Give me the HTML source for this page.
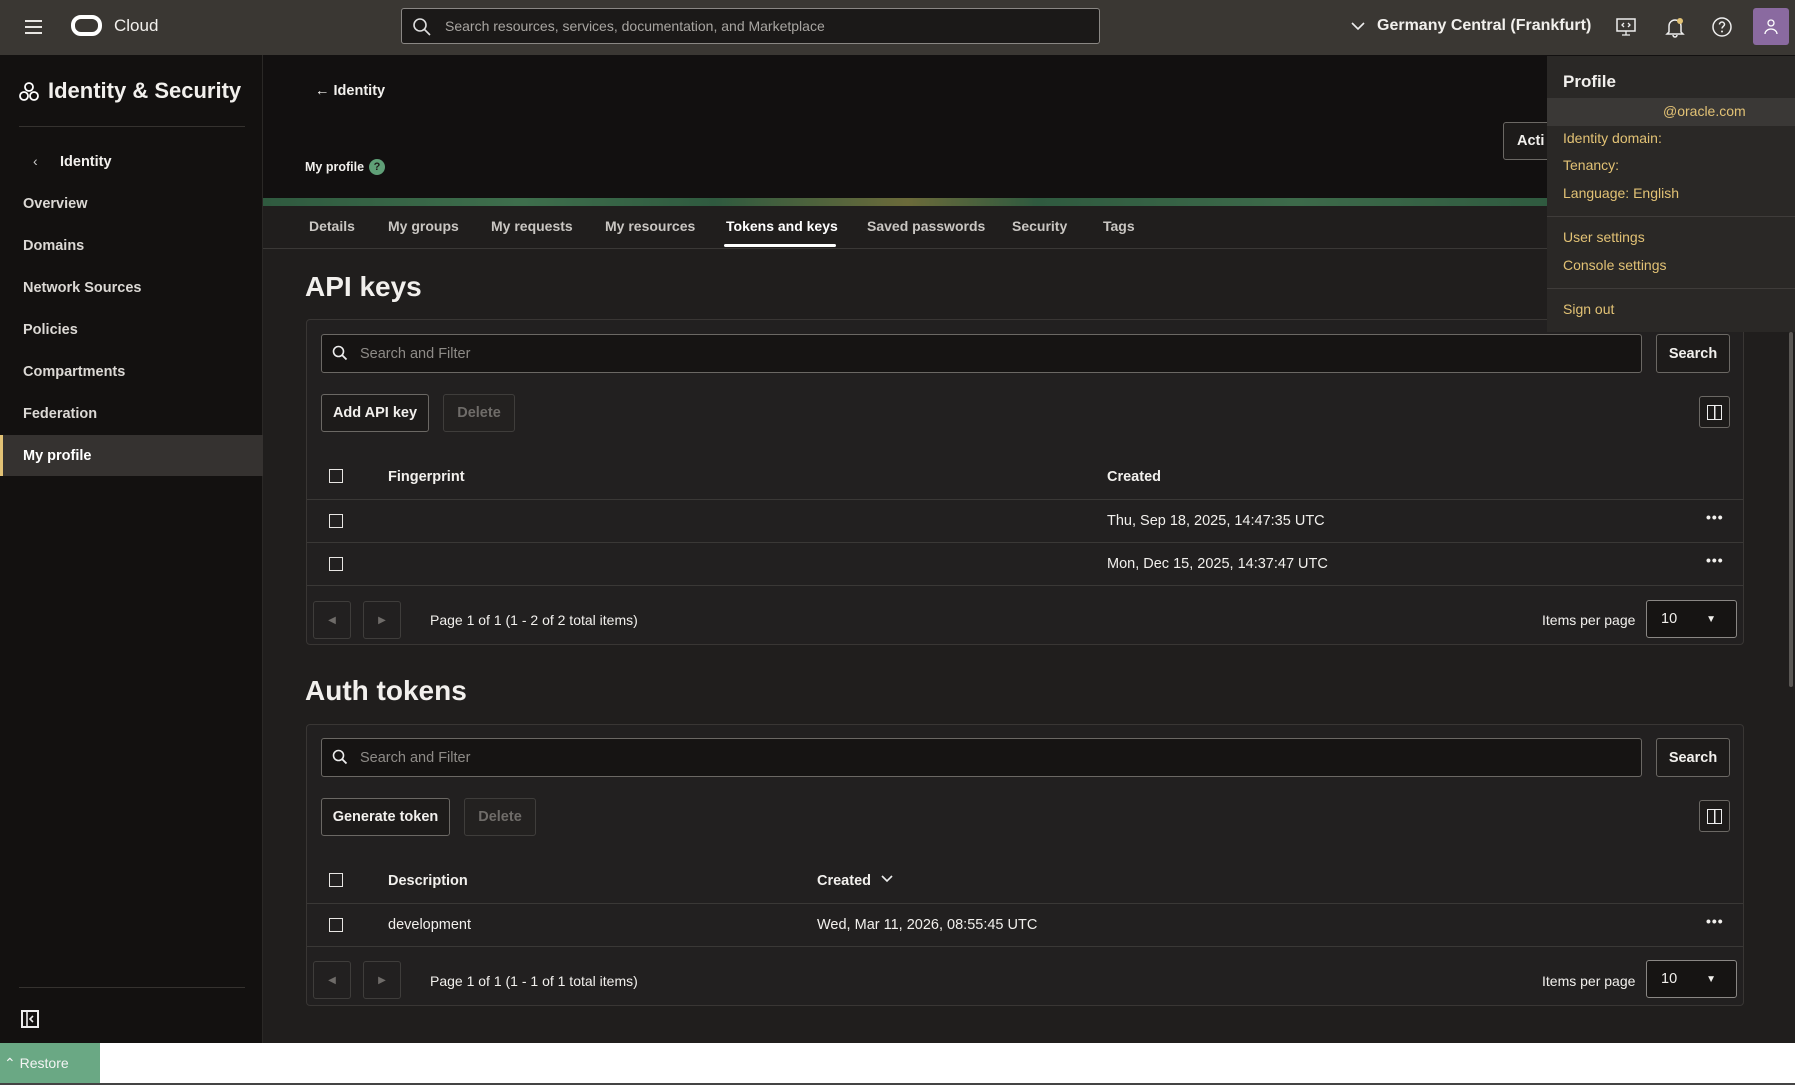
<!DOCTYPE html>
<html><head><meta charset="utf-8">
<style>
*{box-sizing:border-box;margin:0;padding:0}
body{width:1795px;height:1085px;overflow:hidden;background:#201e1d;font-family:"Liberation Sans",sans-serif;color:#f2f0ed;position:relative;font-size:14.5px}
.abs{position:absolute}
.top{left:0;top:0;width:1795px;height:55px;background:#3a3733}
.side{left:0;top:55px;width:263px;height:988px;background:#131110;border-right:1px solid #2a2826}
.hdr{left:263px;top:55px;width:1532px;height:143px;background:#121010}
.b{font-weight:bold}
.btn{position:absolute;border:1px solid #6b6864;border-radius:3px;font-weight:bold;font-size:14.5px;display:flex;align-items:center;justify-content:center;color:#f2f0ed;background:#1d1b1a}
.dis{color:#6f6c69;border-color:#3f3d3b;background:#232120}
.panel{position:absolute;left:306px;width:1438px;border:1px solid #393634;border-radius:4px;background:#222020}
.inp{position:absolute;background:#161413;border:1px solid #6b6864;border-radius:3px;color:#8e8b87;font-size:14.5px;display:flex;align-items:center;padding-left:38px}
.cb{position:absolute;width:14px;height:14px;border:1.5px solid #e8e6e3}
.line{position:absolute;height:1px;background:#3a3836}
.t{position:absolute;white-space:nowrap}
.dots{position:absolute;font-weight:bold;letter-spacing:1px;font-size:14px}
.pg{position:absolute;width:38px;height:38px;border:1px solid #3f3d3b;border-radius:3px;color:#6f6c69;font-size:10px;display:flex;align-items:center;justify-content:center}
.sel{position:absolute;width:91px;height:38px;border:1px solid #8a8784;border-radius:3px;background:#161413;padding-left:14px;display:flex;align-items:center;font-size:14.5px}
.nav{position:absolute;left:23px;font-size:14.5px;font-weight:bold;color:#dcd9d5}
.tab{position:absolute;top:218px;font-size:14px;font-weight:bold;color:#c9c6c2}
.menu{left:1547px;top:56px;width:248px;height:276px;background:#2a2826}
.mi{position:absolute;left:16px;font-size:14px;color:#e2c275}
</style></head><body>
<div class="abs top">
  <div class="abs" style="left:25px;top:20px;width:17px;height:2px;background:#e8e6e3;box-shadow:0 6px 0 #e8e6e3,0 12px 0 #e8e6e3"></div>
  <div class="abs" style="left:71px;top:15px;width:31px;height:21px;border:4px solid #fff;border-radius:10px"></div>
  <div class="t" style="left:114px;top:16px;font-size:17px">Cloud</div>
  <div class="abs" style="left:401px;top:8px;width:699px;height:36px;background:#1b1918;border:1px solid #8a8784;border-radius:3px"></div>
  <svg class="abs" style="left:412px;top:17px" width="20" height="20" viewBox="0 0 20 20"><circle cx="8" cy="8" r="6" fill="none" stroke="#ddd" stroke-width="1.6"/><path d="M12.5 12.5L18 18" stroke="#ddd" stroke-width="1.6"/></svg>
  <div class="t" style="left:445px;top:18px;font-size:14px;color:#a8a5a1">Search resources, services, documentation, and Marketplace</div>
  <svg class="abs" style="left:1350px;top:20px" width="16" height="12"><path d="M2 3l6 6 6-6" fill="none" stroke="#eee" stroke-width="1.6"/></svg>
  <div class="t b" style="left:1377px;top:17px;font-size:16px">Germany Central (Frankfurt)</div>
  <svg class="abs" style="left:1615px;top:16px" width="22" height="22" viewBox="0 0 22 22"><rect x="2" y="3" width="18" height="12" fill="none" stroke="#eee" stroke-width="1.5"/><path d="M11 15v4M7 19h8M9 7l-2 2 2 2M13 7l2 2-2 2" fill="none" stroke="#eee" stroke-width="1.3"/></svg>
  <svg class="abs" style="left:1664px;top:16px" width="22" height="22" viewBox="0 0 22 22"><path d="M5 16V10a6 6 0 0112 0v6l2 2H3z M9 19a2 2 0 004 0" fill="none" stroke="#eee" stroke-width="1.5"/><circle cx="16" cy="5" r="3" fill="#e2c275"/></svg>
  <svg class="abs" style="left:1711px;top:16px" width="22" height="22" viewBox="0 0 22 22"><circle cx="11" cy="11" r="9" fill="none" stroke="#eee" stroke-width="1.5"/><path d="M8.5 8.5a2.5 2.5 0 115 0c0 1.8-2.5 2-2.5 4" fill="none" stroke="#eee" stroke-width="1.5"/><circle cx="11" cy="15.5" r="1" fill="#eee"/></svg>
  <div class="abs" style="left:1753px;top:8px;width:36px;height:37px;background:#8a6aa0;border-radius:3px"></div>
  <svg class="abs" style="left:1762px;top:18px" width="18" height="18"><circle cx="9" cy="5" r="3" fill="none" stroke="#fff" stroke-width="1.3"/><path d="M3 16a6 5 0 0112 0" fill="none" stroke="#fff" stroke-width="1.3"/></svg>
</div>
<div class="abs side">
  <svg class="abs" style="left:18px;top:27px" width="22" height="20" viewBox="0 0 22 20"><circle cx="11" cy="5" r="4" fill="none" stroke="#fff" stroke-width="1.8"/><circle cx="6" cy="14" r="4" fill="none" stroke="#fff" stroke-width="1.8"/><circle cx="16" cy="14" r="4" fill="none" stroke="#fff" stroke-width="1.8"/></svg>
  <div class="t b" style="left:48px;top:23px;font-size:22px">Identity &amp; Security</div>
  <div class="abs" style="left:19px;top:71px;width:226px;height:1px;background:#35322f"></div>
  <div class="t" style="left:33px;top:98px;font-size:14px;color:#ccc">&#8249;</div>
  <div class="t b" style="left:60px;top:99px;font-size:14.5px">Identity</div>
  <div class="nav" style="top:141px">Overview</div>
  <div class="nav" style="top:183px">Domains</div>
  <div class="nav" style="top:225px">Network Sources</div>
  <div class="nav" style="top:267px">Policies</div>
  <div class="nav" style="top:309px">Compartments</div>
  <div class="nav" style="top:351px">Federation</div>
  <div class="abs" style="left:0;top:380px;width:263px;height:41px;background:#353230;border-left:3px solid #e2c275"></div>
  <div class="nav" style="top:393px;color:#fff">My profile</div>
  <div class="abs" style="left:19px;top:932px;width:226px;height:1px;background:#35322f"></div>
  <svg class="abs" style="left:21px;top:955px" width="18" height="18"><rect x="1" y="1" width="16" height="16" fill="none" stroke="#eee" stroke-width="2"/><path d="M6 1v16M12 6l-3 3 3 3" fill="none" stroke="#eee" stroke-width="1.6"/></svg>
</div>
<div class="abs hdr">
  <div class="t b" style="left:52px;top:28px;font-size:14.5px">&#8592; Identity</div>
  <div class="t b" style="left:42px;top:105px;font-size:12.5px">My profile</div>
  <div class="abs" style="left:106px;top:104px;width:16px;height:16px;border-radius:50%;background:#5f9f77;color:#1d1b1a;font-size:11px;font-weight:bold;text-align:center;line-height:16px">?</div>
  <div class="btn" style="left:1240px;top:67px;width:60px;height:38px;justify-content:flex-start;padding-left:13px">Acti</div>
</div>
<div class="abs" style="left:263px;top:198px;width:1290px;height:8px;background:linear-gradient(90deg,#2f5a3f,#3e6e4c 20%,#2f5a3f 35%,#6b6a3a 50%,#2f5a3f 60%,#3d6a4a 80%,#2f5a3f)"></div>
<div class="abs" style="left:263px;top:248px;width:1532px;height:1px;background:#3a3836"></div>
<div class="tab" style="left:309px">Details</div>
<div class="tab" style="left:388px">My groups</div>
<div class="tab" style="left:491px">My requests</div>
<div class="tab" style="left:605px">My resources</div>
<div class="tab" style="left:726px;color:#fff">Tokens and keys</div>
<div class="abs" style="left:724px;top:244px;width:112px;height:3px;background:#fff;border-radius:2px"></div>
<div class="tab" style="left:867px">Saved passwords</div>
<div class="tab" style="left:1012px">Security</div>
<div class="tab" style="left:1103px">Tags</div>

<div class="t b" style="left:305px;top:271px;font-size:28px">API keys</div>
<div class="panel" style="top:319px;height:326px"></div>
<div class="inp" style="left:321px;top:334px;width:1321px;height:39px">Search and Filter</div>
<svg class="abs" style="left:332px;top:345px" width="16" height="16"><circle cx="6.5" cy="6.5" r="5" fill="none" stroke="#eee" stroke-width="1.6"/><path d="M10 10l4.5 4.5" stroke="#eee" stroke-width="1.8"/></svg>
<div class="btn" style="left:1656px;top:334px;width:74px;height:39px">Search</div>
<div class="btn" style="left:321px;top:394px;width:108px;height:38px">Add API key</div>
<div class="btn dis" style="left:443px;top:394px;width:72px;height:38px">Delete</div>
<div class="btn" style="left:1699px;top:396px;width:31px;height:32px"><div style="width:15px;height:15px;border:1.5px solid #eee;background:linear-gradient(90deg,transparent 6px,#eee 6px,#eee 7.5px,transparent 7.5px)"></div></div>
<div class="cb" style="left:329px;top:469px"></div>
<div class="t b" style="left:388px;top:469px">Fingerprint</div>
<div class="t b" style="left:1107px;top:469px">Created</div>
<div class="line" style="left:307px;top:499px;width:1436px"></div>
<div class="cb" style="left:329px;top:514px"></div>
<div class="t" style="left:1107px;top:513px">Thu, Sep 18, 2025, 14:47:35 UTC</div>
<div class="dots" style="left:1706px;top:509px">&bull;&bull;&bull;</div>
<div class="line" style="left:307px;top:542px;width:1436px"></div>
<div class="cb" style="left:329px;top:557px"></div>
<div class="t" style="left:1107px;top:556px">Mon, Dec 15, 2025, 14:37:47 UTC</div>
<div class="dots" style="left:1706px;top:552px">&bull;&bull;&bull;</div>
<div class="line" style="left:307px;top:585px;width:1436px"></div>
<div class="pg" style="left:313px;top:601px">&#9664;</div>
<div class="pg" style="left:363px;top:601px">&#9654;</div>
<div class="t" style="left:430px;top:612px;font-size:14px">Page 1 of 1 (1 - 2 of 2 total items)</div>
<div class="t" style="left:1542px;top:612px;font-size:14px">Items per page</div>
<div class="sel" style="left:1646px;top:600px">10<span style="position:absolute;right:20px;font-size:10px">&#9660;</span></div>

<div class="t b" style="left:305px;top:675px;font-size:28px">Auth tokens</div>
<div class="panel" style="top:724px;height:282px"></div>
<div class="inp" style="left:321px;top:738px;width:1321px;height:39px">Search and Filter</div>
<svg class="abs" style="left:332px;top:749px" width="16" height="16"><circle cx="6.5" cy="6.5" r="5" fill="none" stroke="#eee" stroke-width="1.6"/><path d="M10 10l4.5 4.5" stroke="#eee" stroke-width="1.8"/></svg>
<div class="btn" style="left:1656px;top:738px;width:74px;height:39px">Search</div>
<div class="btn" style="left:321px;top:798px;width:129px;height:38px">Generate token</div>
<div class="btn dis" style="left:464px;top:798px;width:72px;height:38px">Delete</div>
<div class="btn" style="left:1699px;top:800px;width:31px;height:32px"><div style="width:15px;height:15px;border:1.5px solid #eee;background:linear-gradient(90deg,transparent 6px,#eee 6px,#eee 7.5px,transparent 7.5px)"></div></div>
<div class="cb" style="left:329px;top:873px"></div>
<div class="t b" style="left:388px;top:873px">Description</div>
<div class="t b" style="left:817px;top:873px">Created</div>
<svg class="abs" style="left:880px;top:874px" width="14" height="10"><path d="M2 2l5 5 5-5" fill="none" stroke="#eee" stroke-width="1.6"/></svg>
<div class="line" style="left:307px;top:903px;width:1436px"></div>
<div class="cb" style="left:329px;top:918px"></div>
<div class="t" style="left:388px;top:917px">development</div>
<div class="t" style="left:817px;top:917px">Wed, Mar 11, 2026, 08:55:45 UTC</div>
<div class="dots" style="left:1706px;top:913px">&bull;&bull;&bull;</div>
<div class="line" style="left:307px;top:946px;width:1436px"></div>
<div class="pg" style="left:313px;top:961px">&#9664;</div>
<div class="pg" style="left:363px;top:961px">&#9654;</div>
<div class="t" style="left:430px;top:973px;font-size:14px">Page 1 of 1 (1 - 1 of 1 total items)</div>
<div class="t" style="left:1542px;top:973px;font-size:14px">Items per page</div>
<div class="sel" style="left:1646px;top:960px">10<span style="position:absolute;right:20px;font-size:10px">&#9660;</span></div>

<div class="abs" style="left:1789px;top:332px;width:4px;height:355px;background:#5a5754;border-radius:2px"></div>

<div class="abs menu">
  <div class="t b" style="left:16px;top:16px;font-size:17px">Profile</div>
  <div class="abs" style="left:0;top:42px;width:248px;height:28px;background:#3a3836"></div>
  <div class="mi" style="left:116px;top:47px">@oracle.com</div>
  <div class="mi" style="top:74px">Identity domain:</div>
  <div class="mi" style="top:101px">Tenancy:</div>
  <div class="mi" style="top:129px">Language: English</div>
  <div class="abs" style="left:0;top:160px;width:248px;height:1px;background:#3f3c3a"></div>
  <div class="mi" style="top:173px">User settings</div>
  <div class="mi" style="top:201px">Console settings</div>
  <div class="abs" style="left:0;top:232px;width:248px;height:1px;background:#3f3c3a"></div>
  <div class="mi" style="top:245px">Sign out</div>
</div>

<div class="abs" style="left:0;top:1043px;width:1795px;height:42px;background:#fff;border-bottom:2px solid #444"></div>
<div class="abs" style="left:0;top:1043px;width:100px;height:40px;background:#6aa884;color:#f4f4f4;font-size:14px;display:flex;align-items:center;padding-left:4px">&#8963; Restore</div>
</body></html>
